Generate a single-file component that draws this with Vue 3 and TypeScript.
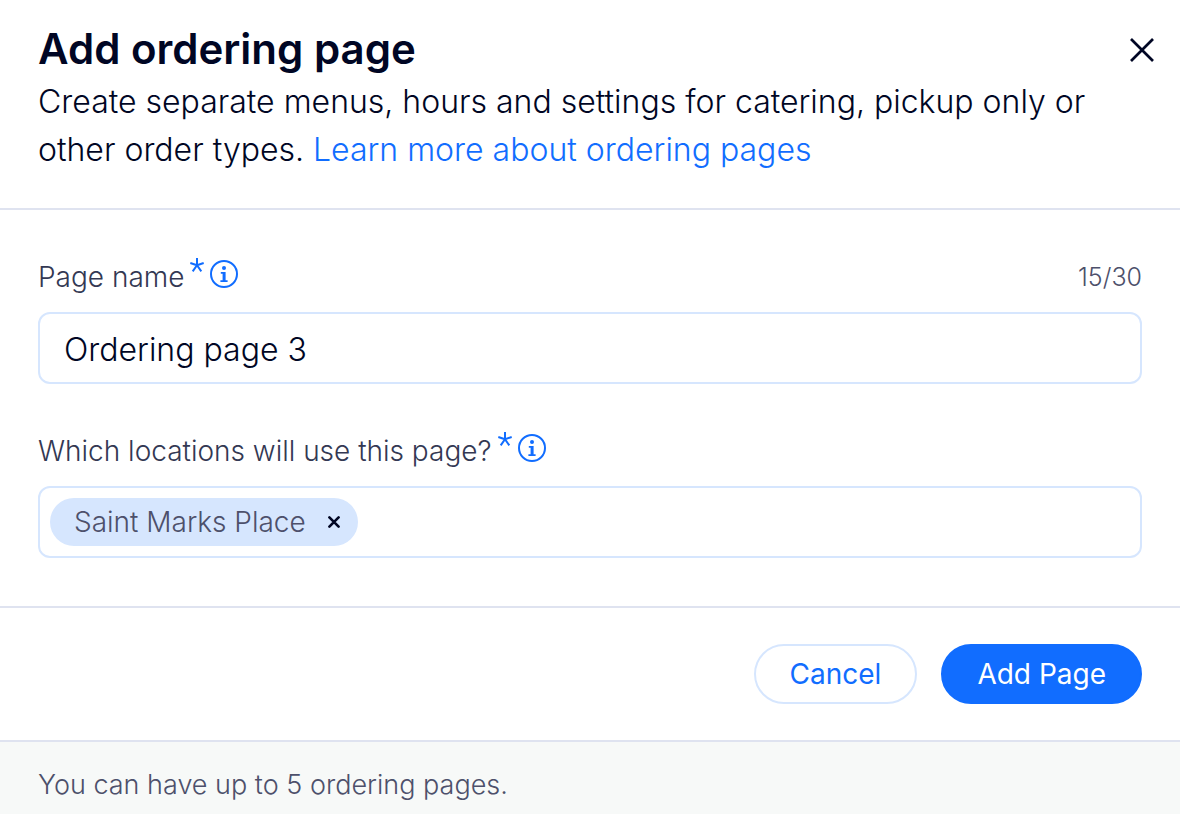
<script setup lang="ts">
import { computed, ref } from 'vue'

const maxLength = 30
const name = ref('Ordering page 3')
const count = computed(() => `${name.value.length}/${maxLength}`)
const locations = ref<string[]>(['Saint Marks Place'])
const query = ref('')

function removeLocation(location: string) {
  locations.value = locations.value.filter((item) => item !== location)
}
</script>

<template>
  <main class="dialog" role="dialog" aria-labelledby="dialog-title">
    <header class="header">
      <div class="intro">
        <h1 id="dialog-title" class="title">Add ordering page</h1>
        <p class="description">
          Create separate menus, hours and settings for catering, pickup only or other order types.
          <a class="link" href="#">Learn more about ordering pages</a>
        </p>
      </div>
      <button class="close" type="button" aria-label="Close">
        <svg width="26" height="26" viewBox="0 0 26 26" aria-hidden="true">
          <path d="M2 2 24 24M24 2 2 24" fill="none" stroke="currentColor" stroke-width="2.7" />
        </svg>
      </button>
    </header>

    <form class="form" @submit.prevent>
      <div class="fields">
        <div class="field">
          <div class="label-row">
            <label class="label" for="page-name">Page name</label>
            <svg class="star" width="14" height="14" viewBox="0 0 14 14" aria-hidden="true">
              <path d="M7 7.2V0M7 7.2.3 5M7 7.2 13.7 5M7 7.2 2.7 13.4M7 7.2l4.3 6.2" />
            </svg>
            <button class="info" type="button" aria-label="About page name">
              <svg width="28" height="28" viewBox="0 0 28 28" aria-hidden="true">
                <circle cx="14" cy="14" r="13" fill="none" stroke="currentColor" stroke-width="2" />
                <circle cx="14" cy="8" r="2" />
                <path d="M10.8 12h4.8v8.2h2V22h-7.2v-1.8h2.2v-6.4h-1.8z" />
              </svg>
            </button>
            <span class="count">{{ count }}</span>
          </div>
          <input id="page-name" v-model="name" class="input" type="text" :maxlength="maxLength" />
        </div>

        <div class="field">
          <div class="label-row">
            <label class="label" for="locations">Which locations will use this page?</label>
            <svg class="star" width="14" height="14" viewBox="0 0 14 14" aria-hidden="true">
              <path d="M7 7.2V0M7 7.2.3 5M7 7.2 13.7 5M7 7.2 2.7 13.4M7 7.2l4.3 6.2" />
            </svg>
            <button class="info" type="button" aria-label="About locations">
              <svg width="28" height="28" viewBox="0 0 28 28" aria-hidden="true">
                <circle cx="14" cy="14" r="13" fill="none" stroke="currentColor" stroke-width="2" />
                <circle cx="14" cy="8" r="2" />
                <path d="M10.8 12h4.8v8.2h2V22h-7.2v-1.8h2.2v-6.4h-1.8z" />
              </svg>
            </button>
          </div>
          <div class="tag-box">
            <span v-for="location in locations" :key="location" class="tag">
              {{ location }}
              <button class="remove" type="button" :aria-label="`Remove ${location}`" @click="removeLocation(location)">
                <svg width="12" height="12" viewBox="0 0 12 12" aria-hidden="true">
                  <path d="M1.4 1.4 10.6 10.6M10.6 1.4 1.4 10.6" fill="none" stroke="currentColor" stroke-width="2.6" stroke-linecap="round" />
                </svg>
              </button>
            </span>
            <input id="locations" v-model="query" class="tag-input" type="text" />
          </div>
        </div>
      </div>

      <div class="actions">
        <button class="button secondary" type="button">Cancel</button>
        <button class="button primary" type="submit">Add Page</button>
      </div>
    </form>

    <footer class="note">You can have up to 5 ordering pages.</footer>
  </main>
</template>

<style>
body {
  margin: 0;
  background: #fff;
}
</style>

<style scoped>
.dialog {
  display: flex;
  flex-direction: column;
  min-height: 100vh;
  box-sizing: border-box;
  color: #000624;
  font-family: Inter, "Open Sans", sans-serif;
}

.dialog * {
  box-sizing: border-box;
}

.dialog button,
.dialog input {
  font-family: inherit;
}

.header {
  display: flex;
  justify-content: space-between;
  gap: 32px;
  padding: 24px 25px 34px 38px;
  border-bottom: 2px solid #dfe3f0;
}

.intro {
  flex: 1;
}

.title {
  margin: 0;
  padding-bottom: 4px;
  font-size: 42px;
  font-weight: 600;
  line-height: 50px;
}

.description {
  margin: 0;
  font-size: 32px;
  font-weight: 300;
  line-height: 48px;
}

.link {
  color: #116dff;
  text-decoration: none;
}

.close,
.info,
.remove {
  display: flex;
  padding: 0;
  border: 0;
  background: none;
  cursor: pointer;
}

.close {
  align-self: flex-start;
  margin-top: 13px;
  color: #000624;
}

.form {
  display: flex;
  flex-direction: column;
}

.fields {
  display: flex;
  flex-direction: column;
  gap: 48px;
  padding: 48px 38px;
  border-bottom: 2px solid #dfe3f0;
}

.field {
  display: flex;
  flex-direction: column;
  gap: 16px;
}

.label-row {
  display: flex;
  align-items: flex-start;
  height: 38px;
}

.label {
  color: #333853;
  font-size: 28px;
  font-weight: 300;
  line-height: 38px;
}

.star {
  margin: 0 6px;
  fill: none;
  stroke: #116dff;
  stroke-width: 2;
}

.info {
  margin-top: 2px;
  color: #116dff;
  fill: currentColor;
}

.count {
  margin-left: auto;
  color: #4d506b;
  font-size: 25px;
  font-weight: 300;
  line-height: 38px;
}

.input,
.tag-box {
  width: 100%;
  height: 72px;
  border: 2px solid #d6e6fe;
  border-radius: 12px;
  background: #fff;
}

.input {
  padding: 2px 24px 0;
  color: #000624;
  font-size: 32px;
  font-weight: 300;
}

.tag-box {
  display: flex;
  align-items: center;
  gap: 12px;
  padding: 0 10px;
}

.tag {
  display: flex;
  align-items: center;
  gap: 22px;
  height: 48px;
  padding: 0 18px 0 24px;
  border-radius: 24px;
  background: #d6e6fe;
  color: #4d506b;
  font-size: 28px;
  font-weight: 300;
  white-space: nowrap;
}

.remove {
  color: #000624;
}

.tag-input {
  flex: 1;
  min-width: 0;
  height: 48px;
  padding: 0;
  border: 0;
  outline: 0;
  font-size: 28px;
}

.actions {
  display: flex;
  justify-content: flex-end;
  gap: 24px;
  padding: 36px 38px;
}

.button {
  height: 60px;
  padding: 0 34px;
  border: 2px solid #d6e6fe;
  border-radius: 30px;
  background: #fff;
  color: #116dff;
  font-size: 28px;
  font-weight: 400;
  cursor: pointer;
}

.primary {
  border-color: #116dff;
  background: #116dff;
  color: #fff;
}

.note {
  flex: 1;
  padding: 24px 38px 10px;
  border-top: 2px solid #dfe3f0;
  background: #f7f9f8;
  color: #4d506b;
  font-size: 27px;
  font-weight: 300;
  line-height: 38px;
}
</style>
